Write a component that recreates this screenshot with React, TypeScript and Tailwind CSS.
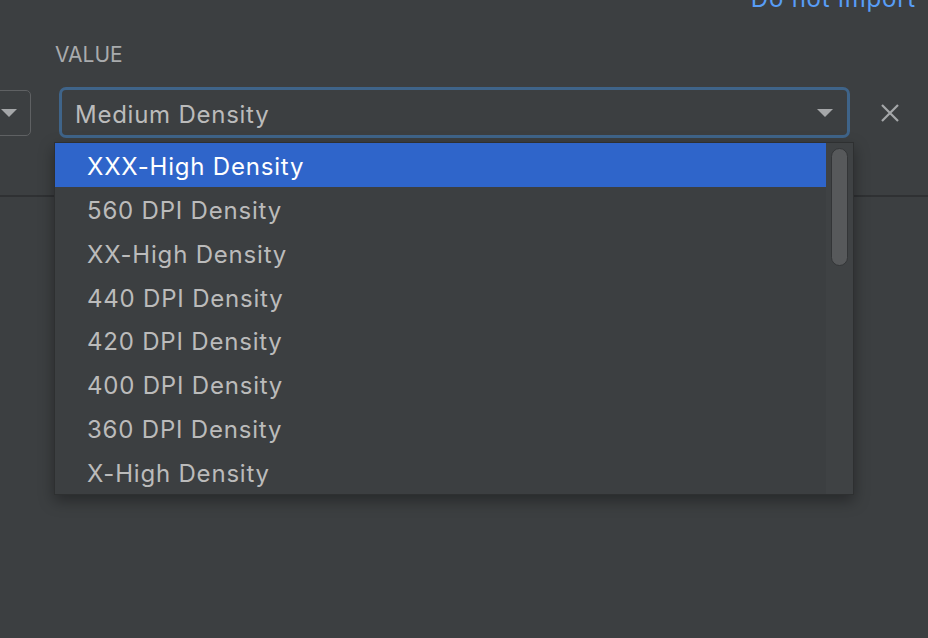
import React from 'react';

const densities = [
  'XXX-High Density',
  '560 DPI Density',
  'XX-High Density',
  '440 DPI Density',
  '420 DPI Density',
  '400 DPI Density',
  '360 DPI Density',
  'X-High Density',
];

const Caret: React.FC<{ className?: string }> = ({ className }) => (
  <svg width="16" height="8" viewBox="0 0 16 8" className={className}>
    <path d="M0 0 H16 L8 8 Z" fill="currentColor" />
  </svg>
);

const App: React.FC = () => {
  return (
    <div
      className="w-[928px] h-[638px] overflow-hidden bg-[#3c3f41] text-[#bbbbbb]"
      style={{ fontFamily: 'Inter, "Noto Sans", sans-serif' }}
    >
      <div className="flex justify-end pr-[12px] -mt-[12px] h-[22px] leading-[22px] text-[24px] tracking-[0.8px] text-[#589df6]">
        Do not import
      </div>

      <div className="pl-[55px] mt-[33px] text-[21px] leading-[24px] text-[#a9abad]">VALUE</div>

      <div className="flex items-center mt-[20px]">
        <div className="-ml-[49px] w-[80px] h-[46px] rounded-[5px] border border-[#5f6163] flex items-center justify-end pr-[13px] text-[#a5a7a9]">
          <Caret />
        </div>

        <div className="relative ml-[28px]">
          <div className="w-[791px] h-[51px] rounded-[7px] border-[3px] border-[#3f6489] flex items-center justify-between pl-[13px] pr-[14px]">
            <span className="pt-[5px] text-[24px] tracking-[0.75px] text-[#bbbbbb]">Medium Density</span>
            <Caret className="text-[#a5a7a9]" />
          </div>

          <div className="absolute left-[-5px] top-[55px] w-[800px] h-[353px] z-10 border border-[#2e3031] bg-[#3c3f41] flex shadow-[0_6px_14px_rgba(0,0,0,0.35)]">
            <div className="flex-1 flex flex-col">
              {densities.map((d, i) => (
                <div
                  key={d}
                  className={
                    'h-[44px] flex items-center pt-[4px] pl-[32px] text-[24px] tracking-[0.8px] ' +
                    (i === 0 ? 'bg-[#2f65ca] text-white' : 'text-[#bbbbbb]')
                  }
                >
                  {d}
                </div>
              ))}
            </div>
            <div className="w-[27px] bg-[#3f4244] pt-[5px] pl-[5px]">
              <div className="w-[17px] h-[118px] rounded-full bg-[#57595b] border border-[#333537]" />
            </div>
          </div>
        </div>

        <div className="ml-[30px] text-[#a5a7a9]">
          <svg width="20" height="20" viewBox="0 0 20 20">
            <path d="M2 2 L18 18 M18 2 L2 18" stroke="currentColor" strokeWidth="2.2" />
          </svg>
        </div>
      </div>

      <div className="mt-[57px] h-[2px] bg-[#2f3133]" />
    </div>
  );
};

export default App;
